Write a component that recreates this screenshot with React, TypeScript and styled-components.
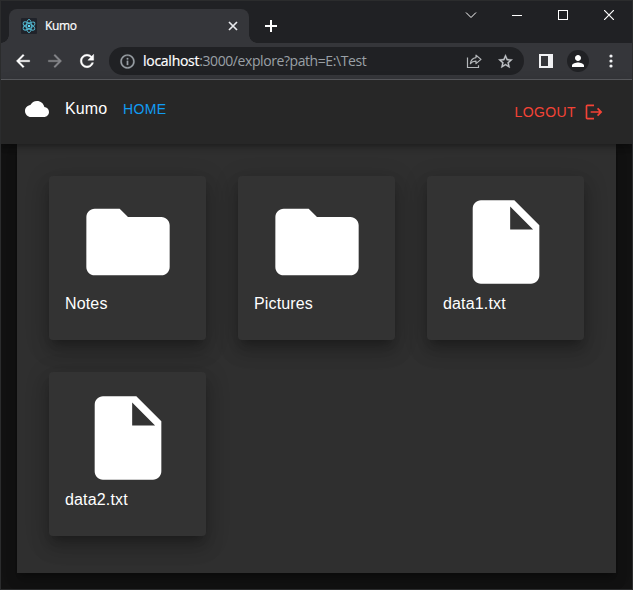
import React from "react";
import styled, { createGlobalStyle } from "styled-components";

const GlobalStyle = createGlobalStyle`
  *, *::before, *::after { box-sizing: border-box; }
  body { margin: 0; background: #121212; overflow: hidden; }
  svg { display: block; flex: none; }
`;

const Window = styled.div`
  width: 633px;
  height: 590px;
  display: flex;
  flex-direction: column;
  border: 1px solid #2b2c2d;
  background: #121212;
  font-family: "Liberation Sans", Arial, sans-serif;
  color: #fff;
  overflow: hidden;
`;

const TabStrip = styled.div`
  height: 42px;
  flex: none;
  display: flex;
  background: #202124;
`;

const Tab = styled.div`
  position: relative;
  width: 240px;
  height: 34px;
  margin: 8px 0 0 8px;
  padding: 0 10px 0 12px;
  display: flex;
  align-items: center;
  border-radius: 8px 8px 0 0;
  background: #35363a;

  &::before, &::after {
    content: "";
    position: absolute;
    bottom: 0;
    width: 8px;
    height: 8px;
  }
  &::before {
    left: -8px;
    background: radial-gradient(circle at 0 0, #202124 7.5px, #35363a 8px);
  }
  &::after {
    right: -8px;
    background: radial-gradient(circle at 100% 0, #202124 7.5px, #35363a 8px);
  }
`;

const TabTitle = styled.span`
  flex: 1;
  margin-left: 8px;
  font: 12px/16px "Open Sans", sans-serif;
  letter-spacing: -0.35px;
  -webkit-text-stroke: 0.2px currentColor;
`;

const NewTab = styled.div`
  width: 44px;
  padding: 18px 0 0 15px;
`;

const WindowControls = styled.div`
  margin-left: auto;
  display: grid;
  grid-template-columns: repeat(4, 46px);
  height: 28px;
  justify-items: center;
  align-items: center;
`;

const Toolbar = styled.div`
  height: 37px;
  flex: none;
  display: flex;
  align-items: center;
  padding: 0 12px 1px;
  background: #35363a;
`;

const NavButtons = styled.div`
  display: flex;
  gap: 12px;
`;

const AddressBar = styled.div`
  width: 415px;
  height: 28px;
  margin-left: 12px;
  padding: 0 10px;
  display: flex;
  align-items: center;
  border-radius: 14px;
  background: #202124;
`;

const Url = styled.div`
  flex: 1;
  margin-left: 7px;
  font: 14px/20px "Open Sans", sans-serif;
  letter-spacing: -0.42px;
  color: #9aa0a6;
  white-space: nowrap;
`;

const Host = styled.span`
  letter-spacing: -0.27px;
  color: #fff;
  -webkit-text-stroke: 0.2px currentColor;
`;

const AddressActions = styled.div`
  display: flex;
  gap: 15px;
`;

const ToolbarActions = styled.div`
  display: flex;
  align-items: center;
  margin-left: 15px;
`;

const Avatar = styled.div`
  width: 22px;
  height: 22px;
  margin: 0 20px 0 14px;
  display: grid;
  place-items: center;
  border-radius: 50%;
  background: #202124;
`;

const Page = styled.div`
  flex: 1;
  display: flex;
  flex-direction: column;
  border-top: 1px solid #5c5d61;
  margin-top: -1px;
`;

const AppBar = styled.header`
  position: relative;
  z-index: 1;
  height: 64px;
  flex: none;
  display: flex;
  align-items: center;
  padding: 0 28px 6px 24px;
  background: #272727;
  box-shadow: 0 2px 4px -1px rgba(0, 0, 0, 0.2), 0 4px 5px rgba(0, 0, 0, 0.14),
    0 1px 10px rgba(0, 0, 0, 0.12);
`;

const Brand = styled.span`
  margin-left: 16px;
  font-size: 16px;
  line-height: 24px;
  letter-spacing: 0.15px;
`;

const NavLink = styled.a`
  margin-left: 15.5px;
  font-size: 14px;
  line-height: 24px;
  letter-spacing: 0.4px;
  color: #119cf3;
`;

const LogoutButton = styled.button`
  display: flex;
  align-items: center;
  gap: 8px;
  margin: 6px 0 0 auto;
  padding: 0;
  border: 0;
  background: none;
  font: 14px/24px "Liberation Sans", Arial, sans-serif;
  letter-spacing: 0.4px;
  color: #f44336;
`;

const Explorer = styled.main`
  width: 599px;
  height: 429px;
  margin-left: 16px;
  padding: 32px;
  display: grid;
  grid-template-columns: repeat(3, 157px);
  grid-auto-rows: 164px;
  gap: 32px;
  background: #2f2f2f;
  box-shadow: 0 5px 5px -3px rgba(0, 0, 0, 0.2), 0 8px 10px 1px rgba(0, 0, 0, 0.14),
    0 3px 14px 2px rgba(0, 0, 0, 0.12);
`;

const Card = styled.article`
  display: flex;
  flex-direction: column;
  padding: 16px 16px 24px;
  border-radius: 4px;
  background: #333;
  box-shadow: 0 7px 8px -4px rgba(0, 0, 0, 0.2), 0 12px 17px 2px rgba(0, 0, 0, 0.14),
    0 5px 22px 4px rgba(0, 0, 0, 0.12);
`;

const CardIcon = styled.svg`
  width: 100px;
  height: 100px;
  align-self: center;
  fill: #fff;
`;

const CardName = styled.span`
  font-size: 16px;
  line-height: 24px;
  letter-spacing: 0.15px;
`;

const paths = {
  folder:
    "M10 4H4c-1.1 0-1.99.9-1.99 2L2 18c0 1.1.9 2 2 2h16c1.1 0 2-.9 2-2V8c0-1.1-.9-2-2-2h-8l-2-2z",
  file: "M6 2c-1.1 0-1.99.9-1.99 2L4 20c0 1.1.89 2 1.99 2H18c1.1 0 2-.9 2-2V8l-6-6H6zm7 7V3.5L18.5 9H13z",
  cloud:
    "M19.35 10.04C18.67 6.59 15.64 4 12 4 9.11 4 6.6 5.64 5.35 8.04 2.34 8.36 0 10.91 0 14c0 3.31 2.69 6 6 6h13c2.76 0 5-2.24 5-5 0-2.64-2.05-4.78-4.65-4.96z",
  logout:
    "m17 7-1.41 1.41L18.17 11H8v2h10.17l-2.58 2.58L17 17l5-5zM4 5h8V3H4c-1.1 0-2 .9-2 2v14c0 1.1.9 2 2 2h8v-2H4V5z",
  back: "M20 11H7.83l5.59-5.59L12 4l-8 8 8 8 1.41-1.41L7.83 13H20v-2z",
  forward: "M12 4l-1.41 1.41L16.17 11H4v2h12.17l-5.58 5.59L12 20l8-8z",
  reload:
    "M17.65 6.35C16.2 4.9 14.21 4 12 4c-4.42 0-7.99 3.58-7.99 8s3.57 8 7.99 8c3.73 0 6.84-2.55 7.73-6h-2.08c-.82 2.33-3.04 4-5.65 4-3.31 0-6-2.69-6-6s2.69-6 6-6c1.66 0 3.14.69 4.22 1.78L13 11h7V4l-2.35 2.35z",
  info: "M11 7h2v2h-2zm0 4h2v6h-2zm1-9C6.48 2 2 6.48 2 12s4.48 10 10 10 10-4.48 10-10S17.52 2 12 2zm0 18c-4.41 0-8-3.59-8-8s3.59-8 8-8 8 3.59 8 8-3.59 8-8 8z",
  star: "M22 9.24l-7.19-.62L12 2 9.19 8.63 2 9.24l5.46 4.73L5.82 21 12 17.27 18.18 21l-1.63-7.03L22 9.24zM12 15.4l-3.76 2.27 1-4.28-3.32-2.88 4.38-.38L12 6.1l1.71 4.04 4.38.38-3.32 2.88 1 4.28L12 15.4z",
  person:
    "M12 12c2.21 0 4-1.79 4-4s-1.79-4-4-4-4 1.79-4 4 1.79 4 4 4zm0 2c-2.67 0-8 1.34-8 4v2h16v-2c0-2.66-5.33-4-8-4z",
};

type IconProps = { name: keyof typeof paths; size: number; color?: string; weight?: number };

const Icon = ({ name, size, color = "#fff", weight = 0 }: IconProps) => (
  <svg width={size} height={size} viewBox="0 0 24 24" fill={color} stroke={color} strokeWidth={weight}>
    <path d={paths[name]} />
  </svg>
);

const ReactLogo = () => (
  <svg width="16" height="16" viewBox="0 0 16 16">
    <rect width="16" height="16" rx="1" fill="#20232a" />
    <g fill="none" stroke="#53b9d1" strokeWidth="0.9">
      <ellipse cx="8" cy="8" rx="2.6" ry="6.6" />
      <ellipse cx="8" cy="8" rx="2.6" ry="6.6" transform="rotate(60 8 8)" />
      <ellipse cx="8" cy="8" rx="2.6" ry="6.6" transform="rotate(120 8 8)" />
    </g>
    <circle cx="8" cy="8" r="1.3" fill="#61dafb" />
  </svg>
);

const ShareIcon = () => (
  <svg width="16" height="16" viewBox="0 0 16 16" fill="none" stroke="#b4b7ba" strokeWidth="1.2">
    <path d="M1.5 4.5v10h11v-2.2" />
    <path
      d="M10 2.2l5 4.2-5 4.2V8.2c-2.6-.1-4.2.6-5.6 2.5.4-3.5 2.2-5.7 5.6-6.1z"
      strokeLinejoin="round"
    />
  </svg>
);

const entries: { name: string; kind: "folder" | "file" }[] = [
  { name: "Notes", kind: "folder" },
  { name: "Pictures", kind: "folder" },
  { name: "data1.txt", kind: "file" },
  { name: "data2.txt", kind: "file" },
];

export default function App() {
  return (
    <>
      <GlobalStyle />
      <Window>
        <TabStrip>
          <Tab>
            <ReactLogo />
            <TabTitle>Kumo</TabTitle>
            <svg width="12" height="12" viewBox="0 0 12 12" stroke="#e8eaed" strokeWidth="1.7">
              <path d="M2 2l8 8M10 2l-8 8" />
            </svg>
          </Tab>
          <NewTab>
            <svg width="14" height="14" viewBox="0 0 14 14" stroke="#fff" strokeWidth="2">
              <path d="M7 1v12M1 7h12" />
            </svg>
          </NewTab>
          <WindowControls>
            <svg width="12" height="12" viewBox="0 0 12 12" fill="none" stroke="#fff">
              <path d="M1 3.5l5 5 5-5" />
            </svg>
            <svg width="10" height="10" viewBox="0 0 10 10" stroke="#fff">
              <path d="M0 5.5h10" />
            </svg>
            <svg width="10" height="10" viewBox="0 0 10 10" fill="none" stroke="#fff">
              <rect x="0.5" y="0.5" width="9" height="9" />
            </svg>
            <svg width="10" height="10" viewBox="0 0 10 10" stroke="#fff" strokeWidth="1.2">
              <path d="M0 0l10 10M10 0l-10 10" />
            </svg>
          </WindowControls>
        </TabStrip>
        <Toolbar>
          <NavButtons>
            <Icon name="back" size={20} weight={0.4} />
            <Icon name="forward" size={20} color="#85868a" weight={0.4} />
            <Icon name="reload" size={20} weight={0.5} />
          </NavButtons>
          <AddressBar>
            <Icon name="info" size={17} color="#9aa0a6" weight={0.4} />
            <Url>
              <Host>localhost</Host>:3000/explore?path=E:\Test
            </Url>
            <AddressActions>
              <ShareIcon />
              <Icon name="star" size={17} color="#c4c7ca" weight={0.5} />
            </AddressActions>
          </AddressBar>
          <ToolbarActions>
            <svg width="14" height="14" viewBox="0 0 14 14">
              <path fill="#f1f2f4" fillRule="evenodd" d="M0 0h14v14H0zM2 2v10h7V2z" />
            </svg>
            <Avatar>
              <Icon name="person" size={18} />
            </Avatar>
            <svg width="4" height="14" viewBox="0 0 4 14" fill="#f1f2f4">
              <circle cx="2" cy="2" r="1.6" />
              <circle cx="2" cy="7" r="1.6" />
              <circle cx="2" cy="12" r="1.6" />
            </svg>
          </ToolbarActions>
        </Toolbar>
        <Page>
          <AppBar>
            <Icon name="cloud" size={24} />
            <Brand>Kumo</Brand>
            <NavLink>HOME</NavLink>
            <LogoutButton>
              LOGOUT
              <Icon name="logout" size={20} color="#f44336" />
            </LogoutButton>
          </AppBar>
          <Explorer>
            {entries.map((entry) => (
              <Card key={entry.name}>
                <CardIcon viewBox="0 0 24 24">
                  <path d={paths[entry.kind]} />
                </CardIcon>
                <CardName>{entry.name}</CardName>
              </Card>
            ))}
          </Explorer>
        </Page>
      </Window>
    </>
  );
}
